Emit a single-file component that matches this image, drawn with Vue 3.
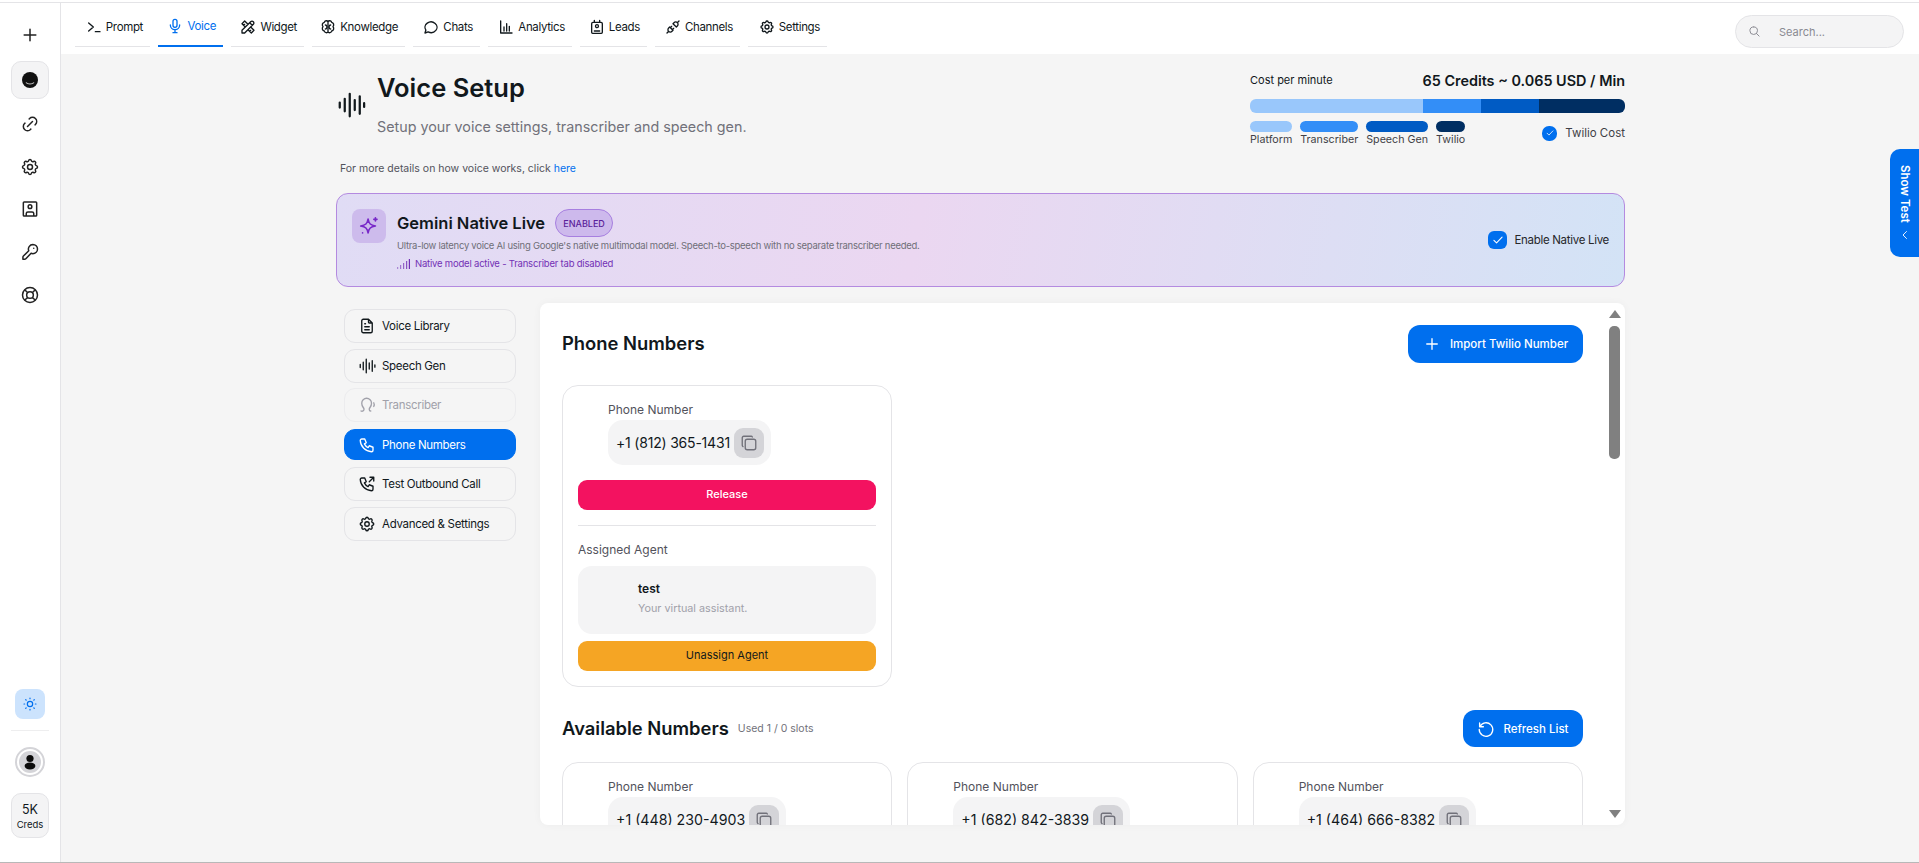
<template>
  <div class="app">
    <aside class="sidebar">
      <div class="side-top">
        <button class="side-btn plus"><Ico name="plus" :size="20" /></button>
        <div class="agent-tile">
          <svg width="18" height="18" viewBox="0 0 18 18">
            <circle cx="9" cy="9" r="8" fill="#111" />
            <path d="M5 11.500c1.500 2 6.500 2 8 0" fill="none" stroke="#c4c4c4" stroke-width="1.200" />
          </svg>
        </div>
        <button v-for="s in sideIcons" :key="s" class="side-btn"><Ico :name="s" :size="20" /></button>
      </div>
      <div class="side-bottom">
        <div class="sun-tile"><Ico name="sun" :size="16" /></div>
        <div class="side-rule"></div>
        <div class="profile">
          <svg width="22" height="22" viewBox="0 0 22 22">
            <circle cx="11" cy="11" r="11" fill="#d4d4d8" />
            <circle cx="11" cy="7.500" r="3.600" fill="#0b0b0b" />
            <ellipse cx="11" cy="15" rx="5.400" ry="3.400" fill="#0b0b0b" />
          </svg>
        </div>
        <div class="creds">
          <span class="creds-num">5K</span>
          <span class="creds-label">Creds</span>
        </div>
      </div>
    </aside>

    <div class="main">
      <header class="topbar">
        <nav class="tabs">
          <a v-for="t in navTabs" :key="t.label" class="tab" :class="{ active: t.label === 'Voice' }">
            <Ico :name="t.icon" :size="16" />
            <span>{{ t.label }}</span>
          </a>
        </nav>
        <div class="search">
          <Ico name="search" :size="13" />
          <span>Search...</span>
        </div>
      </header>

      <section class="page">
        <div class="head">
          <div class="head-left">
            <div class="title-row">
              <Ico name="wave" :size="30" class="title-icon" />
              <div>
                <h1>Voice Setup</h1>
                <p class="subtitle">Setup your voice settings, transcriber and speech gen.</p>
              </div>
            </div>
            <p class="details">For more details on how voice works, click <a>here</a></p>
          </div>
          <div class="cost">
            <div class="cost-top">
              <span class="cost-label">Cost per minute</span>
              <strong>65 Credits ~ 0.065 USD / Min</strong>
            </div>
            <div class="cost-bar">
              <i v-for="c in costParts" :key="c.name" :style="{ width: c.bar + 'px', background: c.color }"></i>
            </div>
            <div class="cost-legend">
              <div class="legend-items">
                <div v-for="c in costParts" :key="c.name" class="legend-item">
                  <i :style="{ background: c.color }"></i>
                  <span>{{ c.name }}</span>
                </div>
              </div>
              <div class="twilio-check">
                <span class="check small"><Ico name="check" :size="10" /></span>
                <span>Twilio Cost</span>
              </div>
            </div>
          </div>
        </div>

        <div class="banner">
          <div class="banner-icon"><Ico name="sparkles" :size="22" /></div>
          <div class="banner-text">
            <div class="banner-title">
              <h2>Gemini Native Live</h2>
              <span class="badge">ENABLED</span>
            </div>
            <p class="banner-desc">Ultra-low latency voice AI using Google's native multimodal model. Speech-to-speech with no separate transcriber needed.</p>
            <p class="banner-status">
              <svg width="13" height="10" viewBox="0 0 13 10" fill="#7331b5">
                <rect x="0" y="8" width="1.200" height="2" opacity=".5" /><rect x="3" y="6" width="1.200" height="4" opacity=".6" /><rect x="6" y="4" width="1.200" height="6" opacity=".7" /><rect x="9" y="2" width="1.200" height="8" opacity=".8" /><rect x="11.800" y="0" width="1.200" height="10" />
              </svg>
              <span>Native model active - Transcriber tab disabled</span>
            </p>
          </div>
          <div class="banner-check">
            <span class="check"><Ico name="check" :size="14" /></span>
            <span>Enable Native Live</span>
          </div>
        </div>

        <div class="body">
          <div class="side-tabs">
            <button v-for="t in voiceTabs" :key="t.label" class="side-tab" :class="{ selected: t.selected, off: t.off }">
              <Ico :name="t.icon" :size="18" />
              <span>{{ t.label }}</span>
            </button>
          </div>

          <div class="panel">
            <div class="panel-scroll">
              <div class="section-head">
                <h3>Phone Numbers</h3>
                <button class="primary"><Ico name="plus" :size="18" /><span>Import Twilio Number</span></button>
              </div>

              <div class="card assigned">
                <div class="number-block">
                  <label>Phone Number</label>
                  <div class="number-pill tight">
                    <span>+1 (812) 365-1431</span>
                    <button class="copy"><Ico name="copy" :size="18" /></button>
                  </div>
                </div>
                <button class="wide danger">Release</button>
                <div class="rule"></div>
                <label class="assigned-label">Assigned Agent</label>
                <div class="agent-box">
                  <strong>test</strong>
                  <span>Your virtual assistant.</span>
                </div>
                <button class="wide warn">Unassign Agent</button>
              </div>

              <div class="section-head second">
                <div class="avail-title">
                  <h3>Available Numbers</h3>
                  <span>Used 1 / 0 slots</span>
                </div>
                <button class="primary refresh"><Ico name="refresh" :size="18" /><span>Refresh List</span></button>
              </div>

              <div class="card-grid">
                <div v-for="n in available" :key="n" class="card">
                  <div class="number-block">
                    <label>Phone Number</label>
                    <div class="number-pill">
                      <span>{{ n }}</span>
                      <button class="copy"><Ico name="copy" :size="18" /></button>
                    </div>
                  </div>
                </div>
              </div>
            </div>

            <div class="scrollbar">
              <i class="arrow up"></i>
              <i class="thumb"></i>
              <i class="arrow down"></i>
            </div>
          </div>
        </div>
      </section>
    </div>

    <div class="show-test">
      <span>Show Test</span>
      <Ico name="chevronLeft" :size="12" />
    </div>
  </div>
</template>

<script setup>
import { h } from "vue";

const paths = {
  plus: "M12 5v14 M5 12h14",
  link: "M9 15l6 -6 M11 6l.463 -.536a5 5 0 0 1 7.071 7.072l-.534 .464 M13 18l-.397 .534a5.068 5.068 0 0 1 -7.127 0a4.972 4.972 0 0 1 0 -7.071l.524 -.463",
  gear: "M10.325 4.317c.426 -1.756 2.924 -1.756 3.350 0a1.724 1.724 0 0 0 2.573 1.066c1.543 -.94 3.310 .826 2.370 2.370a1.724 1.724 0 0 0 1.065 2.572c1.756 .426 1.756 2.924 0 3.350a1.724 1.724 0 0 0 -1.066 2.573c.94 1.543 -.826 3.310 -2.370 2.370a1.724 1.724 0 0 0 -2.572 1.065c-.426 1.756 -2.924 1.756 -3.350 0a1.724 1.724 0 0 0 -2.573 -1.066c-1.543 .94 -3.310 -.826 -2.370 -2.370a1.724 1.724 0 0 0 -1.065 -2.572c-1.756 -.426 -1.756 -2.924 0 -3.350a1.724 1.724 0 0 0 1.066 -2.573c-.94 -1.543 .826 -3.310 2.370 -2.370c1 .608 2.296 .07 2.572 -1.065z M9 12a3 3 0 1 0 6 0a3 3 0 0 0 -6 0",
  contact: "M5 3.500h14a1 1 0 0 1 1 1v15a1 1 0 0 1 -1 1h-14a1 1 0 0 1 -1 -1v-15a1 1 0 0 1 1 -1z M12 7a2.200 2.200 0 1 0 0 4.400a2.200 2.200 0 0 0 0 -4.400 M7.500 20.500v-3a2 2 0 0 1 2 -2h5a2 2 0 0 1 2 2v3",
  key: "M15.500 3a5.500 5.500 0 0 1 0 11c-.8 0 -1.500 -.15 -2.200 -.45l-6.300 6.450a2 2 0 0 1 -1.400 .6h-2.100v-2.300a2 2 0 0 1 .6 -1.400l6.400 -6.300a5.500 5.500 0 0 1 5 -7.600z M16.500 7.500h.01",
  buoy: "M12 3a9 9 0 1 0 0 18a9 9 0 0 0 0 -18 M12 8a4 4 0 1 0 0 8a4 4 0 0 0 0 -8 M15 15l3.350 3.350 M9 15l-3.350 3.350 M5.650 5.650l3.350 3.350 M18.350 5.650l-3.350 3.350",
  sun: "M12 8a4 4 0 1 0 0 8a4 4 0 0 0 0 -8 M3 12h1 M12 3v1 M20 12h1 M12 20v1 M5.600 5.600l.7 .7 M18.400 5.600l-.7 .7 M17.700 17.700l.7 .7 M6.300 17.700l-.7 .7",
  terminal: "M4 6l7 6l-7 6 M14 19h7",
  mic: "M9 5a3 3 0 0 1 6 0v6a3 3 0 0 1 -6 0z M5 10.500a7 7 0 0 0 14 0 M12 17.500v4.500 M9 22h6",
  tools: "M3 21h4l13 -13a1.500 1.500 0 0 0 -4 -4l-13 13v4 M14.500 5.500l4 4 M12 8l-5 -5l-4 4l5 5 M7 8l-1.500 1.500 M16 12l5 5l-4 4l-5 -5 M16 17l-1.500 1.500",
  brain: "M12 4c-1 -2 -5 -2 -5.500 1c-3 .5 -4 4 -2 6.500c-2 2 -1 6 2 6.500c.5 3 4.500 3.500 5.500 1 M12 4c1 -2 5 -2 5.500 1c3 .5 4 4 2 6.500c2 2 1 6 -2 6.500c-.5 3 -4.500 3.500 -5.500 1 M12 4v15 M8 9c1 0 2 .8 2 2 M16 9c-1 0 -2 .8 -2 2 M8 15c1 0 2 -.8 2 -2 M16 15c-1 0 -2 -.8 -2 -2",
  chat: "M3 21l1.300 -4.500c-2.324 -3.437 -1.426 -7.872 2.100 -10.374c3.526 -2.501 8.590 -2.296 11.845 .48c3.255 2.777 3.695 7.266 1.029 10.501c-2.666 3.235 -7.615 4.215 -11.574 2.293l-4.700 1.600z",
  bars: "M4 3v18h17 M9 12v6 M13 7v11 M17 11v7",
  leads: "M6 5h12a2 2 0 0 1 2 2v13a1.500 1.500 0 0 1 -1.500 1.500h-13a1.500 1.500 0 0 1 -1.500 -1.500v-13a2 2 0 0 1 2 -2z M8 5v-3 M16 5v-3 M12 8.500a2.200 2.200 0 1 0 0 4.400a2.200 2.200 0 0 0 0 -4.400 M8 18h8",
  plug: "M7 12l5 5l-1.500 1.500a3.536 3.536 0 1 1 -5 -5l1.500 -1.500z M17 12l-5 -5l1.500 -1.500a3.536 3.536 0 1 1 5 5l-1.500 1.500z M3 21l2.500 -2.500 M18.500 5.500l2.500 -2.500 M10 11l-2 2 M13 14l-2 2",
  search: "M10.500 3.500a7 7 0 1 0 0 14a7 7 0 0 0 0 -14 M20.500 20.500l-5 -5",
  wave: "M3 10v4 M7 7v10 M11 3v18 M15 8v8 M19 5v14 M22.500 10.500v3",
  sparkles: "M11 4.500c.9 5 2.700 6.700 8 7.500c-5.300 .8 -7.100 2.500 -8 7.500c-.9 -5 -2.700 -6.700 -8 -7.500c5.300 -.8 7.100 -2.500 8 -7.500z M19 3v3.500 M17.250 4.750h3.500 M5 19.500h.01",
  check: "M5 12.500l4.500 4.500l9.500 -10",
  file: "M14 3v4a1 1 0 0 0 1 1h4 M17 21h-10a2 2 0 0 1 -2 -2v-14a2 2 0 0 1 2 -2h7l5 5v11a2 2 0 0 1 -2 2z M9 9h1 M9 13h6 M9 17h6",
  ear: "M4 20c2 1 4 -.5 4 -2.500c0 -2 -3 -3 -3 -8a6.500 6.500 0 0 1 13 0c0 5 -3 6 -3 8c0 1.500 1 2.500 2 2.500 M21 9c.8 1.500 .8 3.500 0 5",
  phone: "M5 4h4l2 5l-2.500 1.500a11 11 0 0 0 5 5l1.500 -2.500l5 2v4a2 2 0 0 1 -2 2a16 16 0 0 1 -15 -15a2 2 0 0 1 2 -2",
  phoneOut: "M5 4h4l2 5l-2.500 1.500a11 11 0 0 0 5 5l1.500 -2.500l5 2v4a2 2 0 0 1 -2 2a16 16 0 0 1 -15 -15a2 2 0 0 1 2 -2 M15 9l6 -6 M16 3h5v5",
  copy: "M7 9.667a2.667 2.667 0 0 1 2.667 -2.667h8.666a2.667 2.667 0 0 1 2.667 2.667v8.666a2.667 2.667 0 0 1 -2.667 2.667h-8.666a2.667 2.667 0 0 1 -2.667 -2.667z M4.012 16.737a2.005 2.005 0 0 1 -1.012 -1.737v-10c0 -1.100 .9 -2 2 -2h10c.75 0 1.158 .385 1.500 1",
  refresh: "M3.500 4v5h5 M3.800 9a9 9 0 1 1 -.8 3.500",
  chevronLeft: "M15 5l-7 7l7 7",
};

// small svg helper, every icon here is a stroked 24x24 path
const Ico = (props) =>
  h(
    "svg",
    {
      width: props.size,
      height: props.size,
      viewBox: "0 0 24 24",
      fill: "none",
      stroke: "currentColor",
      "stroke-width": 1.8,
      "stroke-linecap": "round",
      "stroke-linejoin": "round",
    },
    [h("path", { d: paths[props.name] })]
  );
Ico.props = ["name", "size"];

const sideIcons = ["link", "gear", "contact", "key", "buoy"];

const navTabs = [
  { label: "Prompt", icon: "terminal" },
  { label: "Voice", icon: "mic" },
  { label: "Widget", icon: "tools" },
  { label: "Knowledge", icon: "brain" },
  { label: "Chats", icon: "chat" },
  { label: "Analytics", icon: "bars" },
  { label: "Leads", icon: "leads" },
  { label: "Channels", icon: "plug" },
  { label: "Settings", icon: "gear" },
];

const costParts = [
  { name: "Platform", color: "#99c7fb", bar: 173 },
  { name: "Transcriber", color: "#338ef7", bar: 58 },
  { name: "Speech Gen", color: "#005bc4", bar: 58 },
  { name: "Twilio", color: "#002e62", bar: 86 },
];

const voiceTabs = [
  { label: "Voice Library", icon: "file" },
  { label: "Speech Gen", icon: "wave" },
  { label: "Transcriber", icon: "ear", off: true },
  { label: "Phone Numbers", icon: "phone", selected: true },
  { label: "Test Outbound Call", icon: "phoneOut" },
  { label: "Advanced & Settings", icon: "gear" },
];

const available = ["+1 (448) 230-4903", "+1 (682) 842-3839", "+1 (464) 666-8382"];
</script>

<style>
html,
body {
  margin: 0;
  height: 863px;
  overflow: hidden;
  background: #fff;
}
</style>

<style scoped>
.app {
  position: relative;
  display: flex;
  width: 1919px;
  height: 863px;
  box-sizing: border-box;
  padding-top: 2px;
  overflow: hidden;
  border-bottom: 1px solid #b8b8b8;
  font-family: "Inter", "Noto Sans", sans-serif;
  color: #11181c;
  background: #fff;
}

.app::before {
  content: "";
  position: absolute;
  left: 0;
  right: 0;
  top: 2px;
  height: 1px;
  background: #e4e4e7;
}

button {
  font-family: inherit;
  border: none;
  background: none;
  padding: 0;
  color: inherit;
}

h1,
h2,
h3,
p {
  margin: 0;
}

.sidebar {
  width: 61px;
  flex: none;
  box-sizing: border-box;
  border-right: 1px solid #e4e4e7;
  display: flex;
  flex-direction: column;
  justify-content: space-between;
  align-items: center;
  padding-top: 20px;
  padding-bottom: 24px;
}

.side-top {
  display: flex;
  flex-direction: column;
  align-items: center;
}

.side-btn {
  width: 38px;
  height: 42.750px;
  display: flex;
  align-items: center;
  justify-content: center;
  color: #222;
}

.side-btn.plus {
  height: 26px;
  margin-bottom: 13px;
}

.agent-tile {
  width: 38px;
  height: 38px;
  box-sizing: border-box;
  border: 1px solid #e4e4e7;
  border-radius: 10px;
  background: #f4f4f5;
  display: flex;
  align-items: center;
  justify-content: center;
  margin-bottom: 3.600px;
}

.side-bottom {
  display: flex;
  flex-direction: column;
  align-items: center;
}

.sun-tile {
  width: 30px;
  height: 30px;
  border-radius: 8px;
  background: #cce3fd;
  color: #006fee;
  display: flex;
  align-items: center;
  justify-content: center;
}

.side-rule {
  width: 38px;
  height: 1px;
  background: #eeeeef;
  margin: 11px 0 16px;
}

.profile {
  width: 30px;
  height: 30px;
  box-sizing: border-box;
  border: 2px solid #d4d4d8;
  border-radius: 50%;
  background: #fff;
  display: flex;
  align-items: center;
  justify-content: center;
}

.creds {
  width: 38px;
  height: 45px;
  box-sizing: border-box;
  margin-top: 16px;
  border: 1px solid #e4e4e7;
  border-radius: 10px;
  background: #f4f4f5;
  display: flex;
  flex-direction: column;
  align-items: center;
  justify-content: center;
  gap: 2px;
}

.creds-num {
  font-size: 12.500px;
}

.creds-label {
  font-size: 9.500px;
}

.main {
  flex: 1;
  min-width: 0;
  display: flex;
  flex-direction: column;
}

.topbar {
  height: 52px;
  flex: none;
  box-sizing: border-box;
  padding: 12px 0 0 14px;
  display: flex;
  justify-content: space-between;
  background: #fff;
}

.tabs {
  display: grid;
  grid-template-columns: 75px 65px 73px 93px 67px 84px 67px 85px 79px;
  column-gap: 8px;
  height: 33px;
}

.tab {
  display: flex;
  align-items: center;
  justify-content: flex-end;
  gap: 4px;
  padding: 0 7px 7px 0;
  box-sizing: border-box;
  border-bottom: 1px solid #e4e4e7;
  font-size: 11.500px;
  letter-spacing: -0.35px;
  color: #11181c;
}

.tab svg {
  stroke-width: 2;
}

.tab.active {
  color: #006fee;
  border-bottom: 2px solid #006fee;
}

.search {
  width: 169px;
  height: 33px;
  margin-right: 15px;
  margin-top: 1px;
  box-sizing: border-box;
  padding-left: 12px;
  border: 1px solid #e4e4e7;
  border-radius: 17px;
  background: #f4f4f5;
  display: flex;
  align-items: center;
  gap: 18px;
  color: #8a8a92;
  font-size: 11px;
}

.page {
  flex: 1;
  min-height: 0;
  background: #f5f5f5;
  padding: 18px 0 0 275px;
}

.page > * {
  width: 1289px;
}

.head {
  display: flex;
  justify-content: space-between;
  height: 121px;
}

.title-row {
  display: flex;
  align-items: center;
  gap: 11px;
  height: 65px;
}

h1 {
  font-size: 25.500px;
  line-height: 32px;
  font-weight: 600;
  color: #11181c;
}

.subtitle {
  margin-top: 13px;
  font-size: 14.300px;
  line-height: 20px;
  color: #71717a;
}

.details {
  margin: 24px 0 0 4px;
  font-size: 10.500px;
  line-height: 16px;
  color: #52525b;
}

.details a {
  color: #006fee;
}

.cost {
  width: 375px;
  font-size: 10.700px;
}

.cost-top {
  display: flex;
  justify-content: space-between;
  align-items: center;
  height: 16px;
}

.cost-label {
  font-size: 11px;
  color: #11181c;
}

.cost-top strong {
  font-size: 14.400px;
  font-weight: 600;
}

.cost-bar {
  display: flex;
  height: 14px;
  margin-top: 11px;
  border-radius: 6px;
  overflow: hidden;
}

.cost-bar i {
  display: block;
}

.cost-legend {
  display: flex;
  justify-content: space-between;
  margin-top: 8px;
}

.legend-items {
  display: flex;
  gap: 8px;
}

.legend-item {
  display: flex;
  flex-direction: column;
  color: #3f3f46;
}

.legend-item i {
  display: block;
  height: 11px;
  border-radius: 6px;
}

.legend-item span {
  margin-top: 1px;
  line-height: 14px;
}

.twilio-check {
  display: flex;
  align-items: center;
  gap: 8px;
  height: 24px;
  font-size: 11.500px;
  color: #3f3f46;
}

.check {
  width: 19px;
  height: 18px;
  border-radius: 6px;
  background: #006fee;
  color: #fff;
  display: flex;
  align-items: center;
  justify-content: center;
}

.check.small {
  width: 15px;
  height: 15px;
  border-radius: 7px;
}

.banner {
  height: 94px;
  box-sizing: border-box;
  border: 1px solid #b48ae0;
  border-radius: 12px;
  background: linear-gradient(100deg, #e0dcf5 0%, #ebd7f1 45%, #d3e3f6 100%);
  padding: 15px 15px 0 15px;
  display: flex;
}

.banner-icon {
  width: 34px;
  height: 34px;
  border-radius: 8px;
  background: #cdbbec;
  color: #7828c8;
  display: flex;
  align-items: center;
  justify-content: center;
  flex: none;
}

.banner-text {
  margin-left: 11px;
  flex: 1;
}

.banner-title {
  display: flex;
  align-items: center;
  gap: 10px;
  height: 28px;
}

h2 {
  font-size: 16.500px;
  font-weight: 600;
}

.badge {
  width: 58px;
  height: 28px;
  box-sizing: border-box;
  border: 1px solid #a77fe0;
  border-radius: 14px;
  background: #cdb9ec;
  color: #5b1e9a;
  font-size: 9px;
  font-weight: 500;
  display: flex;
  align-items: center;
  justify-content: center;
}

.banner-desc {
  margin-top: 3px;
  font-size: 9.500px;
  letter-spacing: -0.27px;
  line-height: 12px;
  color: #6f6f78;
}

.banner-status {
  margin-top: 6px;
  display: flex;
  align-items: center;
  gap: 5px;
  font-size: 9.500px;
  letter-spacing: -0.2px;
  line-height: 12px;
  color: #7331b5;
}

.banner-check {
  display: flex;
  align-items: center;
  gap: 7px;
  height: 61px;
  font-size: 11.500px;
  letter-spacing: -0.3px;
  color: #27272a;
}

.body {
  display: flex;
  gap: 24px;
  margin-top: 16px;
  height: 522px;
}

.side-tabs {
  width: 172px;
  margin-left: 8px;
  padding-top: 6px;
  display: flex;
  flex-direction: column;
  gap: 5.500px;
  flex: none;
}

.side-tab {
  height: 34px;
  box-sizing: border-box;
  border: 1px solid #e4e4e7;
  border-radius: 11px;
  padding-left: 13px;
  display: flex;
  align-items: center;
  gap: 6px;
  font-size: 11.500px;
  letter-spacing: -0.3px;
  color: #11181c;
}

.side-tab.off {
  color: #a1a1aa;
  border-color: #ececee;
}

.side-tab.selected {
  height: 31px;
  margin: 1.500px 0;
  background: #006fee;
  border-color: #006fee;
  color: #fff;
}

.panel {
  position: relative;
  flex: 1;
  background: #fff;
  border-radius: 8px;
  overflow: hidden;
  box-shadow: 0 0 8px rgba(0, 0, 0, 0.04);
}

.panel-scroll {
  height: 100%;
  overflow: hidden;
  box-sizing: border-box;
  padding: 22px 42px 0 22px;
}

.section-head {
  display: flex;
  justify-content: space-between;
  align-items: center;
  height: 38px;
}

.section-head.second {
  margin-top: 23px;
  height: 37px;
}

h3 {
  font-size: 18.400px;
  font-weight: 600;
  padding-bottom: 2px;
}

.avail-title {
  display: flex;
  align-items: center;
  gap: 9px;
}

.avail-title span {
  font-size: 10.500px;
  color: #71717a;
}

.primary {
  height: 38px;
  width: 175px;
  border-radius: 12px;
  background: #006fee;
  color: #fff;
  font-size: 11.500px;
  font-weight: 500;
  display: flex;
  align-items: center;
  justify-content: center;
  gap: 9px;
}

.primary.refresh {
  width: 120px;
  height: 37px;
  gap: 8px;
}

.card {
  box-sizing: border-box;
  border: 1px solid #e4e4e7;
  border-radius: 16px;
  padding: 16px 15px 15px;
  background: #fff;
}

.card.assigned {
  width: 330px;
  margin-top: 22px;
}

.card-grid {
  display: grid;
  grid-template-columns: repeat(3, 1fr);
  gap: 15px;
  margin-top: 15px;
}

.number-block {
  margin-left: 30px;
}

label {
  display: block;
  font-size: 12px;
  line-height: 16px;
  color: #52525b;
}

.number-pill {
  display: inline-flex;
  align-items: center;
  gap: 4px;
  height: 45px;
  margin-top: 2px;
  padding: 0 7px 0 8px;
  border-radius: 15px;
  background: #f4f4f5;
  font-size: 14.200px;
  vertical-align: top;
}

.number-pill.tight {
  font-size: 14px;
  letter-spacing: -0.2px;
}

.copy {
  width: 30px;
  height: 30px;
  border-radius: 9px;
  background: #d4d4d8;
  color: #71717a;
  display: flex;
  align-items: center;
  justify-content: center;
}

.wide {
  display: block;
  width: 100%;
  height: 30px;
  box-sizing: border-box;
  padding-bottom: 2px;
  border-radius: 9px;
  font-size: 11px;
}

.danger {
  margin-top: 15px;
  background: #f31260;
  color: #fff;
  font-weight: 500;
}

.warn {
  margin-top: 7px;
  background: #f5a524;
  color: #11181c;
}

.rule {
  height: 1px;
  margin-top: 15px;
  background: #e4e4e7;
}

.assigned-label {
  margin-top: 16px;
}

.agent-box {
  height: 68px;
  box-sizing: border-box;
  margin-top: 8px;
  padding: 16px 0 0 60px;
  border-radius: 14px;
  background: #f4f4f5;
  display: flex;
  flex-direction: column;
  gap: 6px;
}

.agent-box strong {
  font-size: 12px;
  line-height: 14px;
  font-weight: 600;
}

.agent-box span {
  font-size: 10.800px;
  line-height: 14px;
  color: #a1a1aa;
}

.scrollbar {
  position: absolute;
  right: 5px;
  top: 0;
  bottom: 0;
  width: 11px;
  display: flex;
  flex-direction: column;
  align-items: center;
}

.arrow {
  display: block;
  width: 0;
  height: 0;
  border-left: 6px solid transparent;
  border-right: 6px solid transparent;
}

.arrow.up {
  margin-top: 7px;
  border-bottom: 8px solid #808080;
}

.thumb {
  display: block;
  width: 11px;
  height: 133px;
  margin-top: 8px;
  border-radius: 5px;
  background: #808080;
}

.arrow.down {
  margin-top: auto;
  margin-bottom: 7px;
  border-top: 8px solid #808080;
}

.show-test {
  position: absolute;
  right: 0;
  top: 149px;
  width: 29px;
  height: 108px;
  box-sizing: border-box;
  border-radius: 10px 0 0 10px;
  background: #006fee;
  color: #fff;
  display: flex;
  flex-direction: column;
  align-items: center;
  justify-content: center;
  gap: 7px;
  font-size: 11.500px;
  font-weight: 600;
}

.show-test span {
  writing-mode: vertical-rl;
}
</style>
